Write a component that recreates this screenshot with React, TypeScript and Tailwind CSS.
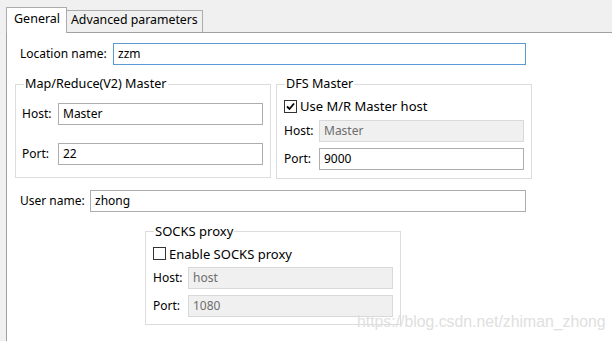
const Check = ({ checked }: { checked?: boolean }) => {
	return (
		<span className="w-[13px] h-[13px] border border-[#333333] bg-white flex items-center justify-center shrink-0">
			{checked && (
				<svg width="9" height="9" viewBox="0 0 9 9">
					<path d="M1 4.5 L3.5 7 L8 1.5" fill="none" stroke="#000" strokeWidth="1.8" />
				</svg>
			)}
		</span>
	);
};

const Field = ({
	value,
	width,
	disabled,
	focused,
}: {
	value: string;
	width: string;
	disabled?: boolean;
	focused?: boolean;
}) => {
	let cls = 'h-[22px] border px-[4px] flex items-center ';
	if (disabled) cls += 'bg-[#f0f0f0] border-[#d9d9d9] text-[#6d6d6d] ';
	else if (focused) cls += 'bg-white border-[#5b9bd5] ';
	else cls += 'bg-white border-[#adadad] ';
	return <div className={cls + width}>{value}</div>;
};

const App = () => {
	return (
		<div className="relative w-[612px] h-[341px] overflow-hidden bg-[#f0f0f0] text-[12px] leading-[16px] text-black font-['Noto_Sans',sans-serif]">
			{/* tabs */}
			<div className="h-[32px] flex items-end pl-[6px]">
				<div className="relative z-10 -mb-px w-[61px] h-[26px] bg-white border border-b-0 border-[#adadad] pl-[7px] pt-[3px] text-[12.5px]">
					General
				</div>
				<div className="-ml-px h-[22px] bg-[#f0f0f0] border border-b-0 border-[#adadad] px-[4px] pt-[1px] text-[12.3px]">
					Advanced parameters
				</div>
			</div>

			{/* panel */}
			<div className="ml-[6px] h-[309px] bg-white border-l border-t border-[#a0a0a0]">
				<div className="flex items-center mt-[10px] ml-[13px]">
					<span className="w-[93px]">Location name:</span>
					<Field value="zzm" width="w-[413px]" focused />
				</div>

				<div className="flex mt-[11px] ml-[8px] gap-[5px]">
					<fieldset className="w-[256px] h-[102px] border border-[#dcdcdc] px-[6px]">
						<legend className="ml-[2px] px-[1px] text-[12.6px]">Map/Reduce(V2) Master</legend>
						<div className="flex items-center mt-[11px]">
							<span className="w-[36px]">Host:</span>
							<Field value="Master" width="w-[205px]" />
						</div>
						<div className="flex items-center mt-[18px]">
							<span className="w-[36px]">Port:</span>
							<Field value="22" width="w-[205px]" />
						</div>
					</fieldset>
					<fieldset className="w-[255px] h-[103px] border border-[#dcdcdc] px-[7px]">
						<legend className="ml-[1px] px-[1px] text-[12.6px]">DFS Master</legend>
						<div className="flex items-center gap-[3px] mt-[5px] h-[18px] text-[13px]">
							<Check checked />
							<span>Use M/R Master host</span>
						</div>
						<div className="flex items-center mt-[5px]">
							<span className="w-[35px]">Host:</span>
							<Field value="Master" width="w-[205px]" disabled />
						</div>
						<div className="flex items-center mt-[6px]">
							<span className="w-[35px]">Port:</span>
							<Field value="9000" width="w-[205px]" />
						</div>
					</fieldset>
				</div>

				<div className="flex items-center mt-[11px] ml-[13px]">
					<span className="w-[70px]">User name:</span>
					<Field value="zhong" width="w-[436px]" />
				</div>

				<fieldset className="mt-[11px] ml-[138px] w-[256px] h-[102px] border border-[#dcdcdc] px-[7px]">
					<legend className="ml-[1px] px-[1px] text-[13px]">SOCKS proxy</legend>
					<div className="flex items-center gap-[3px] mt-[5px] h-[19px] text-[13px]">
						<Check />
						<span>Enable SOCKS proxy</span>
					</div>
					<div className="flex items-center mt-[4px]">
						<span className="w-[35px]">Host:</span>
						<Field value="host" width="w-[205px]" disabled />
					</div>
					<div className="flex items-center mt-[6px]">
						<span className="w-[35px]">Port:</span>
						<Field value="1080" width="w-[205px]" disabled />
					</div>
				</fieldset>
			</div>

			{/* watermark */}
			<div className="absolute left-[357px] top-[312px] text-[15.8px] leading-[20px] text-[#e0e0e0] font-['Liberation_Sans',sans-serif]">
				https://blog.csdn.net/zhiman_zhong
			</div>
		</div>
	);
};

export default App;
